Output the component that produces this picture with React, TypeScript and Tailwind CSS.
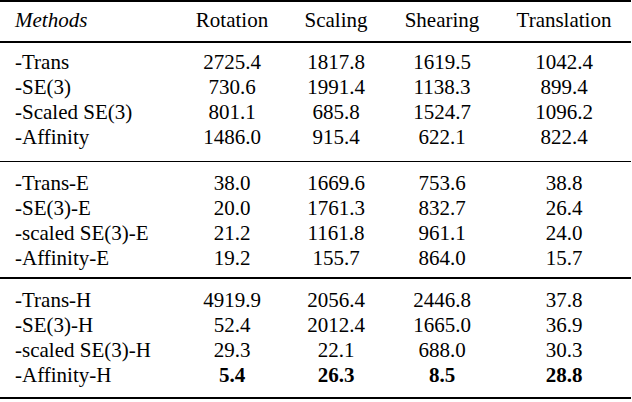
import React from "react";

type Row = { name: string; vals: string[]; bold?: boolean };

const sections: { rows: Row[]; cls: string }[] = [
  {
    cls: "pt-[7px] pb-[11px]",
    rows: [
      { name: "-Trans", vals: ["2725.4", "1817.8", "1619.5", "1042.4"] },
      { name: "-SE(3)", vals: ["730.6", "1991.4", "1138.3", "899.4"] },
      { name: "-Scaled SE(3)", vals: ["801.1", "685.8", "1524.7", "1096.2"] },
      { name: "-Affinity", vals: ["1486.0", "915.4", "622.1", "822.4"] },
    ],
  },
  {
    cls: "pt-[9px] pb-[6px]",
    rows: [
      { name: "-Trans-E", vals: ["38.0", "1669.6", "753.6", "38.8"] },
      { name: "-SE(3)-E", vals: ["20.0", "1761.3", "832.7", "26.4"] },
      { name: "-scaled SE(3)-E", vals: ["21.2", "1161.8", "961.1", "24.0"] },
      { name: "-Affinity-E", vals: ["19.2", "155.7", "864.0", "15.7"] },
    ],
  },
  {
    cls: "pt-[9px] pb-[9px]",
    rows: [
      { name: "-Trans-H", vals: ["4919.9", "2056.4", "2446.8", "37.8"] },
      { name: "-SE(3)-H", vals: ["52.4", "2012.4", "1665.0", "36.9"] },
      { name: "-scaled SE(3)-H", vals: ["29.3", "22.1", "688.0", "30.3"] },
      { name: "-Affinity-H", vals: ["5.4", "26.3", "8.5", "28.8"], bold: true },
    ],
  },
];

const cols = "grid grid-cols-[180px_104px_104px_108px_136px]";

export default function App() {
  return (
    <div className="w-[632px] h-[402px] bg-white text-black text-[21px] leading-[25px] font-['Liberation_Serif','Times_New_Roman',serif]">
      <div className="w-[631px] h-[2px] bg-black" />
      <div className={`${cols} pt-[6px] pb-[8px]`}>
        <div className="pl-[15px] italic">Methods</div>
        <div className="text-center">Rotation</div>
        <div className="text-center">Scaling</div>
        <div className="text-center">Shearing</div>
        <div className="text-center">Translation</div>
      </div>
      {sections.map((s, i) => (
        <div key={i}>
          <div className="w-[631px] h-[1.5px] bg-black" />
          <div className={s.cls}>
            {s.rows.map((r) => (
              <div key={r.name} className={cols}>
                <div className="pl-[15px]">{r.name}</div>
                {r.vals.map((v, j) => (
                  <div key={j} className={`text-center ${r.bold ? "font-bold" : ""}`}>
                    {v}
                  </div>
                ))}
              </div>
            ))}
          </div>
        </div>
      ))}
      <div className="w-[631px] h-[2.5px] bg-black" />
    </div>
  );
}
